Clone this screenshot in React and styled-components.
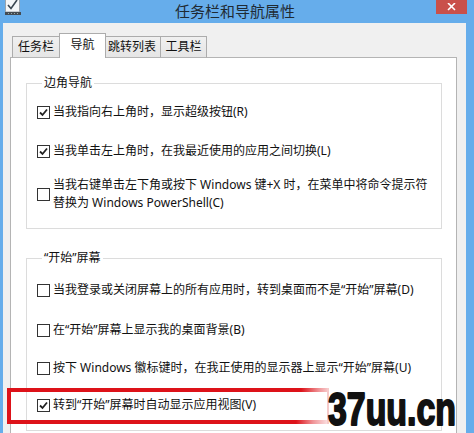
import React from 'react'
import styled, { createGlobalStyle } from 'styled-components'

const Global = createGlobalStyle`
  html, body { margin: 0; padding: 0; background: #fff; }
  body { font-family: "Noto Sans", "Noto Sans CJK SC", sans-serif; }
`

const Window = styled.div`
  position: relative;
  width: 474px;
  height: 433px;
  overflow: hidden;
  background: #66adeb;
  display: flex;
  flex-direction: column;
`

const TitleBar = styled.div`
  height: 23px;
  flex: none;
  display: grid;
  grid-template-columns: 40px 1fr 44px;
  align-items: start;
`

const AppIcon = styled.svg`
  margin-left: 5px;
  display: block;
`

const Title = styled.div`
  text-align: center;
  font-family: "Noto Sans CJK SC", sans-serif;
  font-size: 15px;
  line-height: 21px;
  color: #1f2a33;
`

const CloseButton = styled.div`
  margin-left: 6px;
  width: 31px;
  height: 14px;
  background: #c9504a;
  display: flex;
  align-items: center;
  justify-content: center;
`

const Body = styled.div`
  flex: 1;
  margin: 0 8px 0 3px;
  background: #f0f0f0;
  display: flex;
  flex-direction: column;
  padding-top: 10px;
  min-height: 0;
`

const TabRow = styled.div`
  display: flex;
  align-items: flex-end;
  padding-left: 9px;
  margin-bottom: -1px;
  position: relative;
  z-index: 1;
`

const Tab = styled.div`
  box-sizing: border-box;
  width: ${p => p.$w}px;
  height: ${p => (p.$active ? 25 : 22)}px;
  margin: 0 ${p => (p.$active ? -2 : 0)}px;
  position: relative;
  z-index: ${p => (p.$active ? 2 : 1)};
  border: 1px solid #acacac;
  border-bottom: ${p => (p.$active ? 'none' : '1px solid #b4b4b4')};
  background: ${p => (p.$active ? '#fff' : 'linear-gradient(#f0f0f0, #e5e5e5)')};
  font-size: 12px;
  line-height: ${p => (p.$active ? 21 : 20)}px;
  color: #111;
  text-align: center;
  & + & { margin-left: ${p => (p.$active ? -2 : -1)}px; }
`

const Panel = styled.div`
  flex: 1;
  margin: 0 9px 0 7px;
  background: #fff;
  border: 1px solid #b4b4b4;
  border-bottom: none;
  padding: 0 14px 0 15px;
`

const Group = styled.fieldset`
  margin: ${p => p.$top}px 0 0;
  padding: 0 0 16px 10px;
  border: 1px solid #dcdcdc;
  min-width: 0;
`

const Legend = styled.legend`
  padding: 0 2px;
  margin-left: 5px;
  font-size: 12px;
  line-height: 16px;
  color: #111;
`

const Row = styled.div`
  display: flex;
  align-items: center;
  gap: 3px;
  margin-top: ${p => p.$top}px;
  font-size: 12px;
  line-height: 18px;
  color: #111;
  white-space: nowrap;
`

const Box = styled.span`
  flex: none;
  box-sizing: border-box;
  width: 13px;
  height: 13px;
  border: 1px solid #333;
  background: #fff;
  display: flex;
  align-items: center;
  justify-content: center;
`

const RedMark = styled.div`
  position: absolute;
  left: 7px;
  top: 388px;
  width: 322px;
  height: 36px;
  box-sizing: border-box;
  border-left: 4px solid #dd1219;
  border-right: 2px solid rgba(225, 80, 80, 0.3);
  background:
    linear-gradient(to right, #dd1219 0, #dd1219 290px, rgba(221, 18, 25, 0.45) 308px, rgba(221, 18, 25, 0.1) 322px) top / 100% 4px no-repeat,
    linear-gradient(to right, #dd1219 0, #dd1219 285px, rgba(221, 18, 25, 0.45) 302px, rgba(221, 18, 25, 0.1) 318px) bottom / 100% 4px no-repeat;
`

const Watermark = styled.svg`
  position: absolute;
  left: 327px;
  top: 390px;
  overflow: visible;
`

const Check = ({ on }) => (
  <Box>
    {on && (
      <svg width="9" height="9" viewBox="0 0 9 9">
        <polyline points="1,4.5 3.5,7 8,1.5" fill="none" stroke="#222" strokeWidth="1.8" />
      </svg>
    )}
  </Box>
)

const Option = ({ on, top, children }) => (
  <Row $top={top}>
    <Check on={on} />
    <span>{children}</span>
  </Row>
)

export default function App () {
  return (
    <Window>
      <Global />
      <TitleBar>
        <AppIcon width="17" height="16" viewBox="0 0 17 16">
          <rect x="0.5" y="-2" width="14" height="14" fill="#f4f6f8" stroke="#9aa4ad" />
          <polyline points="3,5 6,8.5 12,0" fill="none" stroke="#3a4650" strokeWidth="1.6" />
          <rect x="0" y="12" width="16" height="3" fill="#444b52" />
          <rect x="3" y="13" width="1" height="1" fill="#9aa" />
          <rect x="6" y="13" width="1" height="1" fill="#9aa" />
          <rect x="9" y="13" width="1" height="1" fill="#9aa" />
          <rect x="12" y="13" width="1" height="1" fill="#9aa" />
        </AppIcon>
        <Title>任务栏和导航属性</Title>
        <CloseButton>
          <svg width="9" height="8" viewBox="0 0 9 8">
            <path d="M1 0 L8 7 M8 0 L1 7" stroke="#fff" strokeWidth="1.6" />
          </svg>
        </CloseButton>
      </TitleBar>
      <Body>
        <TabRow>
          <Tab $w={48}>任务栏</Tab>
          <Tab $w={47} $active>导航</Tab>
          <Tab $w={58}>跳转列表</Tab>
          <Tab $w={47}>工具栏</Tab>
        </TabRow>
        <Panel>
          <Group $top={17}>
            <Legend>边角导航</Legend>
            <Option on top={12}>当我指向右上角时，显示超级按钮(R)</Option>
            <Option on top={21}>当我单击左上角时，在我最近使用的应用之间切换(L)</Option>
            <Option top={16}>
              当我右键单击左下角或按下 Windows 键+X 时，在菜单中将命令提示符
              <br />
              替换为 Windows PowerShell(C)
            </Option>
          </Group>
          <Group $top={21}>
            <Legend>“开始”屏幕</Legend>
            <Option top={15}>当我登录或关闭屏幕上的所有应用时，转到桌面而不是“开始”屏幕(D)</Option>
            <Option top={22}>在“开始”屏幕上显示我的桌面背景(B)</Option>
            <Option top={20}>按下 Windows 徽标键时，在我正使用的显示器上显示“开始”屏幕(U)</Option>
            <Option on top={19}>转到“开始”屏幕时自动显示应用视图(V)</Option>
          </Group>
        </Panel>
      </Body>
      <RedMark />
      <Watermark width="132" height="38" viewBox="0 0 132 38">
        <text
          x="1"
          y="35"
          textLength="128"
          lengthAdjust="spacingAndGlyphs"
          fontFamily="Liberation Sans, sans-serif"
          fontWeight="700"
          fontSize="46"
          fill="#111"
          stroke="#111"
          strokeWidth="2"
          strokeLinejoin="round"
        >
          37uu.cn
        </text>
      </Watermark>
    </Window>
  )
}
